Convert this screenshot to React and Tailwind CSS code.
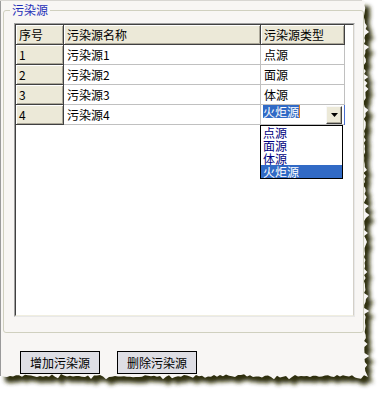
import React from 'react';

function makePath(dx = 0, dy = 0) {
  let s = 98765;
  const rnd = () => {
    s = (s * 1103515245 + 12345) % 2147483648;
    return s / 2147483648;
  };
  const pts = [[0, 0], [363, 0]];
  for (let y = 2; y < 374; y += 3) {
    const r = rnd();
    const x = 363 + (r < 0.3 ? r * 22 : r * 3);
    pts.push([x, y]);
  }
  pts.push([368, 377]);
  for (let x = 364; x > 0; x -= 3) {
    const r = rnd();
    const y = 374 + (r < 0.3 ? r * 18 : r * 3);
    pts.push([x, y]);
  }
  pts.push([0, 376]);
  return 'M' + pts.map((p) => `${p[0] + dx},${p[1] + dy}`).join(' L') + ' Z';
}

const FONT = { fontFamily: '"SimSun", "Noto Sans CJK SC", "Liberation Sans", sans-serif' };

function HeadCell({ w, children }) {
  return (
    <div
      className={`${w} h-[20px] shrink-0 bg-[#ece9d8] border-r border-b border-[#404040] shadow-[inset_1px_1px_0_#ffffff,inset_-1px_-1px_0_#aca899] pl-[3px] leading-[19px] text-black`}
    >
      {children}
    </div>
  );
}

function Cell({ w, children }) {
  return (
    <div className={`${w} h-[20px] shrink-0 bg-white border-r border-b border-[#c0c0c0] pl-[3px] leading-[19px] text-black`}>
      {children}
    </div>
  );
}

export default function App() {
  const rows = [
    ['1', '污染源1', '点源'],
    ['2', '污染源2', '面源'],
    ['3', '污染源3', '体源'],
  ];
  return (
    <div className="relative w-[384px] h-[398px] bg-white overflow-hidden text-[12px]" style={FONT}>
      <svg className="absolute inset-0" width="384" height="398" viewBox="0 0 384 398">
        <defs>
          <filter id="blur" x="-10%" y="-10%" width="130%" height="130%">
            <feGaussianBlur stdDeviation="2" />
          </filter>
        </defs>
        <path d={makePath(5, 6)} fill="#2e2e08" filter="url(#blur)" />
        <path d={makePath(0, 0)} fill="#f8f6f4" />
        <line x1="0.5" y1="0" x2="0.5" y2="376" stroke="#9a9a9a" />
        <line x1="0" y1="0.5" x2="362" y2="0.5" stroke="#d8d6d2" />
      </svg>

      <div className="relative pl-[3px] pt-[3px]">
        <fieldset className="w-[361px] h-[330px] border border-[#d0d0bf] rounded-[3px] pl-[10px] pr-[6px] pt-[6px] m-0">
          <legend className="ml-[-4px] px-[2px] text-[12px] leading-[14px] text-[#1f2fb8]">污染源</legend>
          <div className="w-[341px] h-[294px] border border-[#a0a0a0] border-r-[#e8e8e8] border-b-[#e8e8e8]">
            <div className="relative w-full h-full bg-white border border-[#404040] border-r-[#d4d0c8] border-b-[#f0eee0]">
              <div className="flex">
                <HeadCell w="w-[48px]">序号</HeadCell>
                <HeadCell w="w-[197px]">污染源名称</HeadCell>
                <HeadCell w="w-[84px]">污染源类型</HeadCell>
              </div>
              {rows.map((r) => (
                <div key={r[0]} className="flex">
                  <HeadCell w="w-[48px]">{r[0]}</HeadCell>
                  <Cell w="w-[197px]">{r[1]}</Cell>
                  <Cell w="w-[84px]">{r[2]}</Cell>
                </div>
              ))}
              <div className="flex">
                <HeadCell w="w-[48px]">4</HeadCell>
                <Cell w="w-[197px]">污染源4</Cell>
                <div className="w-[84px] h-[20px] shrink-0 bg-white border-b border-[#c0c0c0] flex items-start">
                  <div className="flex-1 h-[20px] flex items-start pl-[2px] border-r border-[#4a6fd0]">
                    <span className="h-[13px] leading-[13px] bg-[#316ac5] text-white border-r border-[#e08020]">火炬源</span>
                    <div className="ml-auto mr-[2px] mt-[1px] w-[16px] h-[18px] bg-[#ece9d8] border border-[#f8f8f8] border-r-[#404040] border-b-[#404040] shadow-[inset_-1px_-1px_0_#aca899] flex items-center justify-center">
                      <svg width="7" height="4" viewBox="0 0 7 4">
                        <path d="M0 0 H7 L3.5 4 Z" fill="#000" />
                      </svg>
                    </div>
                  </div>
                </div>
              </div>

              <div className="absolute left-[244px] top-[100px] w-[83px] h-[54px] border border-black bg-white flex flex-col">
                <div className="h-[13px] leading-[13px] pl-[2px] text-[#000080]">点源</div>
                <div className="h-[13px] leading-[13px] pl-[2px] text-[#000080]">面源</div>
                <div className="h-[13px] leading-[13px] pl-[2px] text-[#000080]">体源</div>
                <div className="h-[13px] leading-[13px] pl-[2px] bg-[#316ac5] text-white">火炬源</div>
              </div>
            </div>
          </div>
        </fieldset>

        <div className="flex gap-[17px] ml-[17px] mt-[18px]">
          <button className="w-[80px] h-[23px] border border-black bg-[#dedee4] text-black text-[12px] leading-[21px]">增加污染源</button>
          <button className="w-[80px] h-[23px] border border-black bg-[#dedee4] text-black text-[12px] leading-[21px]">删除污染源</button>
        </div>
      </div>
    </div>
  );
}
